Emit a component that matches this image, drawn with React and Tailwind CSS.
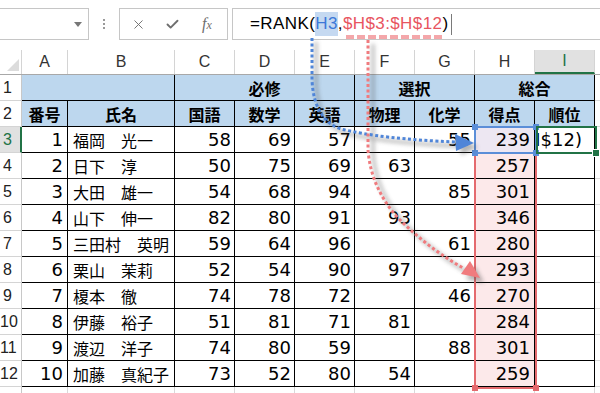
import { X, Check } from 'lucide-react';

const COLS = ['A', 'B', 'C', 'D', 'E', 'F', 'G', 'H', 'I'];
const W = ['w-[46px]', 'w-[107px]', 'w-[60px]', 'w-[60px]', 'w-[60px]', 'w-[60px]', 'w-[60px]', 'w-[60px]', 'w-[60px]'];

const DATA = [
  [1, '福岡　光一', 58, 69, 57, '', 55, 239],
  [2, '日下　淳', 50, 75, 69, 63, '', 257],
  [3, '大田　雄一', 54, 68, 94, '', 85, 301],
  [4, '山下　伸一', 82, 80, 91, 93, '', 346],
  [5, '三田村　英明', 59, 64, 96, '', 61, 280],
  [6, '栗山　茉莉', 52, 54, 90, 97, '', 293],
  [7, '榎本　徹', 74, 78, 72, '', 46, 270],
  [8, '伊藤　裕子', 51, 81, 71, 81, '', 284],
  [9, '渡辺　洋子', 74, 80, 59, '', 88, 301],
  [10, '加藤　真紀子', 73, 52, 80, 54, '', 259],
];

const HEAD2 = ['番号', '氏名', '国語', '数学', '英語', '物理', '化学', '得点', '順位'];

const num = "font-['DejaVu_Sans','Noto_Sans_CJK_JP',sans-serif] text-[18px] text-black";
const jp = "font-['Noto_Sans_CJK_JP',sans-serif] text-[16px] text-black";
const cell = 'shrink-0 h-full border-r border-b border-black flex items-center';

function RowHead({ n, active }) {
  return (
    <div
      className={`w-[22px] shrink-0 h-full border-b border-b-[#d4d4d4] flex items-center font-['Liberation_Sans',sans-serif] text-[16px] ${
        active ? 'bg-[#e1e1e1] text-[#217346] border-r-2 border-r-[#217346]' : 'border-r border-r-[#c8c8c8] text-[#222]'
      }`}
    >
      <span className="w-[15px] text-center">{n}</span>
    </div>
  );
}

function FormulaBar() {
  return (
    <div className="h-[50px] pt-[8px] flex items-start">
      {/* name box */}
      <div className="w-[89px] h-[32px] border-y border-r border-[#c6c6c6] flex items-center justify-end pr-[6px]">
        <svg width="8" height="5" viewBox="0 0 8 5">
          <polygon points="0,0 8,0 4,5" fill="#777" />
        </svg>
      </div>
      <div className="w-[30px] h-[32px] flex flex-col items-center justify-center gap-[2px]">
        <span className="w-[2px] h-[2px] bg-[#9a9a9a]" />
        <span className="w-[2px] h-[2px] bg-[#9a9a9a]" />
        <span className="w-[2px] h-[2px] bg-[#9a9a9a]" />
      </div>
      {/* cancel / enter / fx */}
      <div className="w-[109px] h-[32px] border border-[#c6c6c6] flex items-center pl-[11px] text-[#6e6e6e]">
        <X className="w-[15px] h-[15px]" strokeWidth={1.5} />
        <Check className="w-[15px] h-[15px] ml-[19px]" strokeWidth={3} />
        <span className="ml-[22px] font-['Liberation_Serif',serif] italic text-[16px] leading-none">
          f<span className="text-[12px]">x</span>
        </span>
      </div>
      {/* formula input */}
      <div className="ml-[4px] flex-1 h-[32px] border-y border-l border-[#c6c6c6] flex items-center pl-[17px] font-['Liberation_Sans',sans-serif] text-[17px] tracking-[0.4px] text-black relative">
        <span>=RANK(</span>
        <span className="inline-block h-[24px] leading-[24px] bg-[#c5d9f1] text-[#3c78d8]">H3</span>
        <span>,</span>
        <span className="text-[#e8555f]">$H$3:$H$12</span>
        <span>)</span>
        <span className="ml-[3px] w-px h-[21px] bg-[#7a7a7a]" />
        <div className="absolute left-[113px] top-[26px] flex gap-[3px]">
          {[0, 1, 2, 3, 4, 5, 6, 7, 8].map((i) => (
            <span key={i} className="w-[8px] h-[4px] bg-[#f4a7aa]" />
          ))}
        </div>
      </div>
    </div>
  );
}

function ColHeaders() {
  return (
    <div className="flex h-[25px] border-b border-[#a8a8a8] font-['Liberation_Sans',sans-serif] text-[16px] text-[#333]">
      <div className="w-[22px] shrink-0 border-r border-[#d4d4d4] flex items-end justify-end pr-[2px] pb-[3px]">
        <svg width="12" height="12" viewBox="0 0 12 12">
          <polygon points="12,0 12,12 0,12" fill="#dcdcdc" />
        </svg>
      </div>
      {COLS.map((c, i) =>
        c === 'I' ? (
          <div key={c} className={`${W[i]} shrink-0 border-r border-[#d4d4d4] bg-[#e1e1e1] border-b-2 border-b-[#217346] text-[#217346] flex items-center justify-center`}>
            {c}
          </div>
        ) : (
          <div key={c} className={`${W[i]} shrink-0 border-r border-[#d4d4d4] flex items-center justify-center`}>
            {c}
          </div>
        )
      )}
      <div className="flex-1" />
    </div>
  );
}

function Sheet() {
  return (
    <div className="flex flex-col">
      <ColHeaders />

      {/* row 1 */}
      <div className="flex h-[26px]">
        <RowHead n={1} />
        <div className={`${cell} w-[153px] bg-[#bdd7ee]`} />
        <div className={`${cell} w-[180px] bg-[#bdd7ee] justify-center font-bold ${jp}`}>必修</div>
        <div className={`${cell} w-[120px] bg-[#bdd7ee] justify-center font-bold ${jp}`}>選択</div>
        <div className={`${cell} w-[120px] bg-[#bdd7ee] justify-center font-bold ${jp}`}>総合</div>
        <div className="flex-1 border-b border-[#d9d9d9]" />
      </div>

      {/* row 2 */}
      <div className="flex h-[26px]">
        <RowHead n={2} />
        {HEAD2.map((h, i) => (
          <div key={h} className={`${cell} ${W[i]} bg-[#bdd7ee] justify-center font-bold ${jp}`}>
            {h}
          </div>
        ))}
        <div className="flex-1 border-b border-[#d9d9d9]" />
      </div>

      {/* data rows */}
      {DATA.map((r, ri) => (
        <div key={r[0]} className="flex h-[26px]">
          <RowHead n={ri + 3} active={ri === 0} />
          <div className={`${cell} ${W[0]} justify-end pr-[4px] ${num}`}>{r[0]}</div>
          <div className={`${cell} ${W[1]} pl-[5px] whitespace-nowrap ${jp}`}>{r[1]}</div>
          {[2, 3, 4, 5, 6].map((k) => (
            <div key={k} className={`${cell} ${W[k]} justify-end pr-[3px] ${num}`}>{r[k]}</div>
          ))}
          <div className={`${cell} ${W[7]} justify-end pr-[4px] ${num} ${ri === 0 ? 'bg-[#ede7f2]' : 'bg-[#fce9ea]'}`}>{r[7]}</div>
          {ri === 0 ? (
            <div className={`${cell} ${W[8]} justify-end pr-[12px] overflow-hidden whitespace-nowrap ${num}`}>
              <span>$H$12)</span>
            </div>
          ) : (
            <div className={`${cell} ${W[8]}`} />
          )}
          <div className="flex-1 border-b border-[#d9d9d9]" />
        </div>
      ))}

      {/* row 13 (cut off) */}
      <div className="flex h-[6px]">
        <div className="w-[22px] shrink-0 border-r border-[#c8c8c8]" />
        {W.map((w, i) => (
          <div key={i} className={`${w} shrink-0 border-r border-[#d9d9d9]`} />
        ))}
      </div>
    </div>
  );
}

function Handle({ className }) {
  return <span className={`absolute w-[6px] h-[6px] ${className}`} />;
}

function Overlays() {
  return (
    <>
      {/* red range H3:H12 */}
      <div className="absolute left-[474px] top-[126px] w-[63px] h-[263px] border-2 border-[#e46a6e]">
        <Handle className="-left-[4px] -bottom-[4px] bg-[#e46a6e]" />
        <Handle className="-right-[4px] -bottom-[4px] bg-[#e46a6e]" />
      </div>
      {/* blue H3 */}
      <div className="absolute left-[474px] top-[126px] w-[63px] h-[28px] border-2 border-[#5b8ed8]">
        <Handle className="-left-[4px] -top-[4px] bg-[#5b8ed8]" />
        <Handle className="-right-[4px] -top-[4px] bg-[#5b8ed8]" />
        <Handle className="-left-[4px] -bottom-[4px] bg-[#5b8ed8]" />
        <Handle className="-right-[4px] -bottom-[4px] bg-[#5b8ed8]" />
      </div>
      {/* active I3 */}
      <div className="absolute left-[536px] top-[126px] w-[61px] h-[28px] border-2 border-[#217346]">
        <Handle className="-right-[4px] -bottom-[4px] bg-[#217346] outline outline-1 outline-white" />
      </div>

      {/* precedent arrows */}
      <svg className="absolute left-0 top-0 pointer-events-none" width="600" height="393" viewBox="0 0 600 393">
        <defs>
          <filter id="soft" x="-20%" y="-20%" width="140%" height="140%">
            <feGaussianBlur stdDeviation="2" />
          </filter>
        </defs>
        <g filter="url(#soft)" opacity="0.4" stroke="#444" strokeWidth="3" fill="none">
          <path d="M316 42 L316 84 Q318 124 345 133 Q385 143 460 146" />
          <path d="M373 44 L373 154 Q376 192 403 222 Q433 252 468 273" />
          <polygon points="460,139 478,147 461,155" fill="#444" stroke="none" />
          <polygon points="484,283 475,266 466,279" fill="#444" stroke="none" />
        </g>
        <path d="M312 38 L312 80 Q314 120 341 129 Q381 139 456 142" stroke="#4f85d8" strokeWidth="3" strokeDasharray="3 2.5" fill="none" />
        <polygon points="455,134 474,143 456,151" fill="#4f85d8" />
        <path d="M368 40 L368 150 Q371 188 398 218 Q428 248 463 268" stroke="#f07b7e" strokeWidth="3" strokeDasharray="3 2.5" fill="none" />
        <polygon points="480,278 470,261 461,274" fill="#f07b7e" />
      </svg>
    </>
  );
}

export default function App() {
  return (
    <div className="relative w-[600px] h-[393px] overflow-hidden bg-white">
      <FormulaBar />
      <Sheet />
      <Overlays />
    </div>
  );
}
